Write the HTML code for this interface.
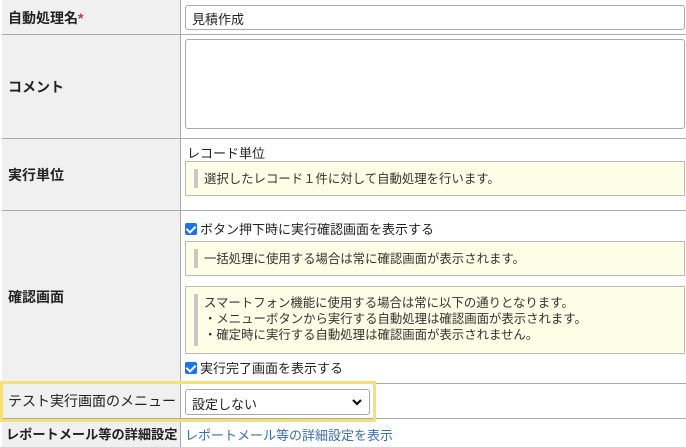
<!DOCTYPE html><html><head><meta charset="utf-8"><style>
body{margin:0;width:686px;height:447px;overflow:hidden;background:#fff;font-family:"Liberation Sans","Noto Sans CJK JP",sans-serif;font-size:13px;color:#222;position:relative}
div{position:absolute;box-sizing:border-box}
.lab{left:2px;width:179px;background:#f0f0f0;border-right:1px solid #aaa;padding-left:6px;display:flex;align-items:center;font-weight:bold;font-size:14px;white-space:nowrap}
.h{left:2px;right:0;height:1px;background:#aaa}
.inp{left:185px;border:1px solid #aaa;border-radius:3px;background:#fff}
.note{left:185px;width:500px;background:#fefee6;border:1px solid #bbb;padding:6px 0 0 18px;font-size:12.4px;line-height:16px;color:#333}
.note:before{content:"";position:absolute;left:8px;top:7px;bottom:7px;width:4px;background:#c8c8c8}
.cb{left:185px;display:flex;align-items:center}
.cb i{display:inline-block;width:12px;height:12px;background:#1a73e8;border-radius:2px;margin-right:3px;position:relative}
.cb i:after{content:"";position:absolute;left:3px;top:1px;width:4px;height:7px;border:solid #fff;border-width:0 2px 2px 0;transform:rotate(45deg)}
</style></head><body>
<div style="left:2px;top:0;bottom:0;width:1px;background:#aaa"></div>
<div class="lab" style="top:0;height:35px">自動処理名<span style="color:#c0392b">*</span></div>
<div class="h" style="top:34px"></div>
<div class="lab" style="top:35px;height:104px">コメント</div>
<div class="h" style="top:138px"></div>
<div class="lab" style="top:139px;height:72px">実行単位</div>
<div class="h" style="top:210px"></div>
<div class="lab" style="top:211px;height:172px">確認画面</div>
<div class="h" style="top:383px"></div>
<div class="lab" style="top:384px;height:34px;font-weight:normal">テスト実行画面のメニュー</div>
<div class="h" style="top:418px"></div>
<div class="lab" style="top:419px;height:28px;font-size:13.2px;padding-left:4px">レポートメール等の詳細設定</div>

<div class="inp" style="top:5px;width:500px;height:25px;padding:3px 6px">見積作成</div>
<div class="inp" style="top:39px;width:500px;height:90px"></div>
<div style="left:187px;top:143px">レコード単位</div>
<div class="note" style="top:161px;height:35px;padding-top:9px">選択したレコード１件に対して自動処理を行います。</div>
<div class="cb" style="top:219px">
<i></i>ボタン押下時に実行確認画面を表示する</div>
<div class="note" style="top:241px;height:35px;padding-top:9px">一括処理に使用する場合は常に確認画面が表示されます。</div>
<div class="note" style="top:286px;height:68px;padding-top:8px">スマートフォン機能に使用する場合は常に以下の通りとなります。<br>・メニューボタンから実行する自動処理は確認画面が表示されます。<br>・確定時に実行する自動処理は確認画面が表示されません。</div>
<div class="cb" style="top:358px"><i></i>実行完了画面を表示する</div>
<div style="left:0;top:381px;width:376px;height:41px;border:3px solid #f3e07a"></div>
<div class="inp" style="top:389px;width:185px;height:26px;padding:4px 6px">設定しない<svg style="position:absolute;right:7px;top:9px" width="10" height="7" viewBox="0 0 10 7"><path d="M1 1 L5 5 L9 1" stroke="#111" stroke-width="2.2" fill="none"/></svg></div>
<div style="left:185px;top:425px;color:#3a6fb0">レポートメール等の詳細設定を表示</div>
</body></html>
